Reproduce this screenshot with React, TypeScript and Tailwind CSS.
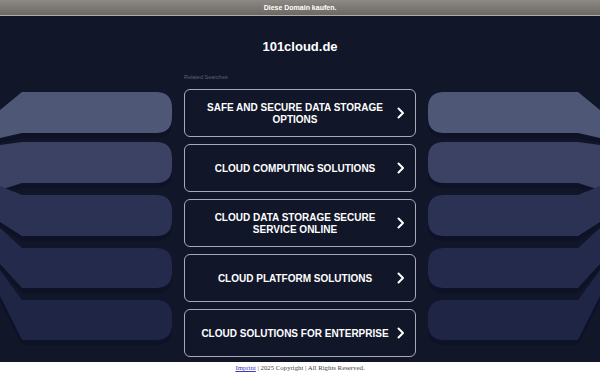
import React from "react";

const items = [
  ["SAFE AND SECURE DATA STORAGE", "OPTIONS"],
  ["CLOUD COMPUTING SOLUTIONS"],
  ["CLOUD DATA STORAGE SECURE", "SERVICE ONLINE"],
  ["CLOUD PLATFORM SOLUTIONS"],
  ["CLOUD SOLUTIONS FOR ENTERPRISE"],
];

const shapes = [
  { t: 92, b: 133, t0: 110, b0: 138, c: "#4f5776" },
  { t: 142, b: 183, t0: 145, b0: 190, c: "#3b4263" },
  { t: 195, b: 236, t0: 186, b0: 222, c: "#2b3254" },
  { t: 248, b: 288, t0: 228, b0: 264, c: "#232a4b" },
  { t: 300, b: 340, t0: 270, b0: 296, c: "#1e2545" },
];

function leftPath(s: { t: number; b: number; t0: number; b0: number }, dy = 0) {
  const r = 16;
  const t = s.t + dy;
  const b = s.b + dy;
  return `M 0 ${s.t0 + dy} L 22 ${t} L ${172 - r} ${t} Q 172 ${t} 172 ${t + r} L 172 ${b - r} Q 172 ${b} ${172 - r} ${b} L 22 ${b} L 0 ${s.b0 + dy} Z`;
}

function Background() {
  return (
    <svg
      className="absolute left-0 top-0"
      width={600}
      height={346}
      viewBox="0 16 600 346"
    >
      {[0, 1].map((side) => (
        <g key={side} transform={side ? "translate(600,0) scale(-1,1)" : undefined}>
          {shapes.map((s, i) => (
            <path key={"s" + i} d={leftPath(s, 5)} fill="#0e1226" />
          ))}
          {shapes.map((s, i) => (
            <path key={"p" + i} d={leftPath(s)} fill={s.c} />
          ))}
        </g>
      ))}
    </svg>
  );
}

function Chevron() {
  return (
    <svg width="8" height="12" viewBox="0 0 8 12" className="shrink-0">
      <polyline
        points="1.5,1.5 6,6 1.5,10.5"
        fill="none"
        stroke="#ffffff"
        strokeWidth="2"
        strokeLinecap="round"
        strokeLinejoin="round"
      />
    </svg>
  );
}

export default function App() {
  return (
    <div
      className="w-[600px] h-[375px] overflow-hidden flex flex-col bg-white"
      style={{ fontFamily: '"Liberation Sans", Arial, sans-serif' }}
    >
      <div className="h-[16px] shrink-0 flex items-center justify-center bg-gradient-to-b from-[#8d8984] to-[#6c6864] border-b border-[#aeaaa6]">
        <span className="text-[7px] font-bold text-white leading-none">Diese Domain kaufen.</span>
      </div>
      <div className="relative h-[346px] shrink-0 bg-[#111629] flex flex-col items-center">
        <Background />
        <div className="relative flex flex-col items-center pt-[23px]">
          <div className="text-[13px] leading-[16px] font-bold text-white">101cloud.de</div>
          <div className="w-[232px] mt-[18px] text-[5.5px] leading-[8px] text-[#5d6278]">
            Related Searches
          </div>
          <div className="mt-[8px] flex flex-col gap-[7px]">
            {items.map((lines, i) => (
              <div
                key={i}
                className="w-[232px] h-[48px] rounded-[6px] border-[1.5px] border-[#a7abb9] bg-[#111629] flex items-center pl-[12px] pr-[10px]"
              >
                <div className="flex-1 pt-[2px] text-center text-white font-bold text-[10px] leading-[12.5px]">
                  {lines.map((l, j) => (
                    <div key={j} className="whitespace-nowrap">{l}</div>
                  ))}
                </div>
                <div className="ml-[4px] flex items-center">
                  <Chevron />
                </div>
              </div>
            ))}
          </div>
        </div>
      </div>
      <div
        className="flex-1 flex items-center justify-center text-[6.8px] text-[#444]"
        style={{ fontFamily: '"Liberation Serif", "Times New Roman", serif' }}
      >
        <a className="text-[#3b3bc4] underline">Imprint</a>
        <span>&nbsp;| 2025 Copyright | All Rights Reserved.</span>
      </div>
    </div>
  );
}
